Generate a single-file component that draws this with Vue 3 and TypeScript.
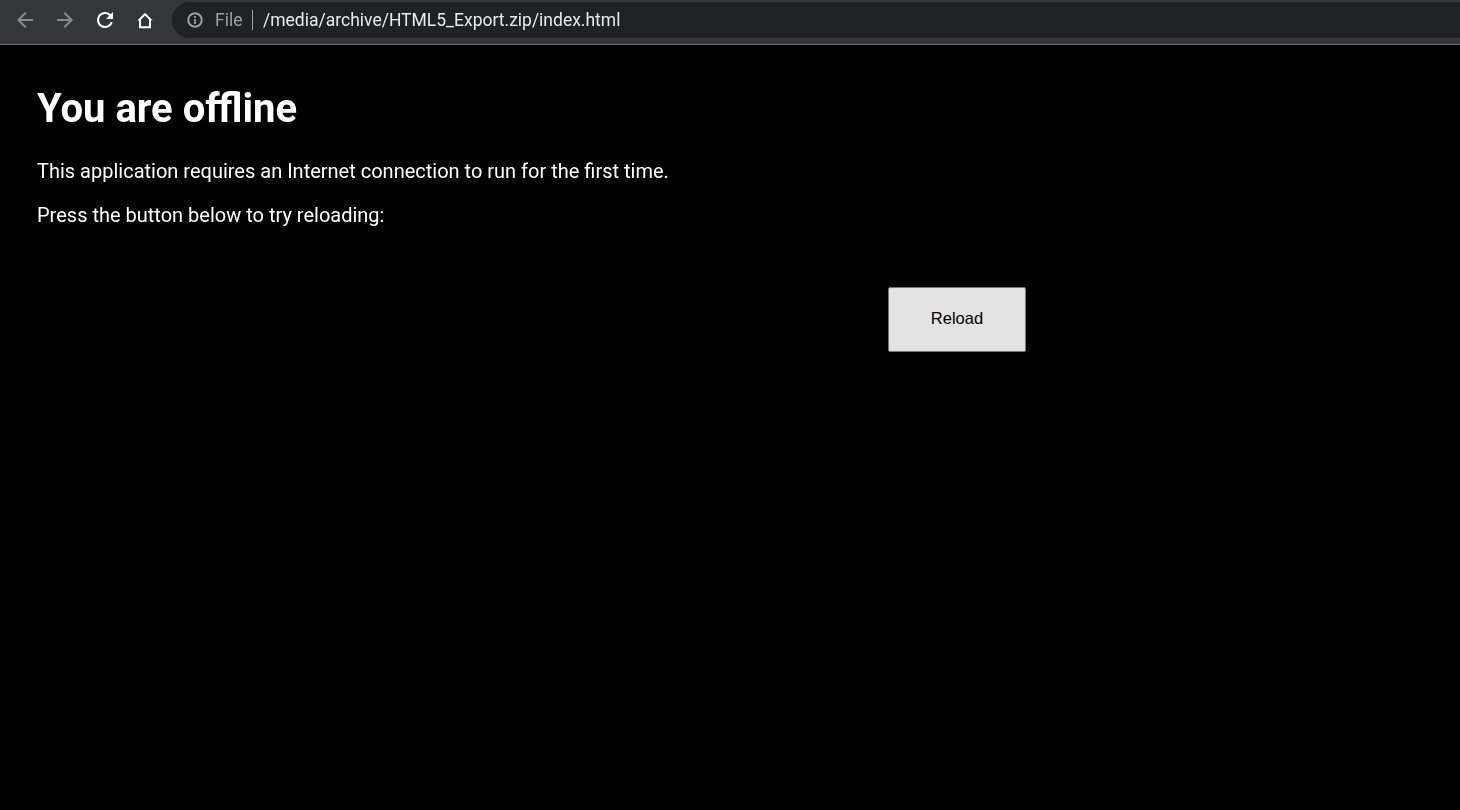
<script setup lang="ts">
const address = '/media/archive/HTML5_Export.zip/index.html'
</script>

<template>
  <div class="page">
    <header class="toolbar">
      <div class="nav">
        <svg class="icon dim" viewBox="0 0 24 24"><path d="M20 11H7.83l5.59-5.59L12 4l-8 8 8 8 1.41-1.41L7.83 13H20v-2z" /></svg>
        <svg class="icon dim" viewBox="0 0 24 24"><path d="M12 4l-1.41 1.41L16.17 11H4v2h12.17l-5.58 5.59L12 20l8-8z" /></svg>
        <svg class="icon" viewBox="0 0 24 24"><path d="M17.65 6.35A7.96 7.96 0 0 0 12 4a8 8 0 1 0 7.73 10h-2.08A6 6 0 1 1 12 6c1.66 0 3.14.69 4.22 1.78L13 11h7V4l-2.35 2.35z" /></svg>
        <svg class="icon" viewBox="0 0 24 24"><path fill-rule="evenodd" d="M12 4.7 4.3 12.4H6v7.9h12v-7.9h1.7L12 4.7zM12 7.5l4 4v6.8H8v-6.8l4-4z" /></svg>
      </div>
      <div class="omnibox">
        <svg class="info" viewBox="0 0 24 24"><path fill-rule="evenodd" d="M12 1.7a10.3 10.3 0 1 0 0 20.6 10.3 10.3 0 0 0 0-20.6zm0 2.6a7.7 7.7 0 1 1 0 15.4 7.7 7.7 0 0 1 0-15.4zM10.8 6.8h2.4v2.4h-2.4zM10.8 10.8h2.4v6.4h-2.4z" /></svg>
        <span class="scheme">File</span>
        <span class="divider"></span>
        <span class="url">{{ address }}</span>
      </div>
    </header>
    <main class="content">
      <h1>You are offline</h1>
      <p>This application requires an Internet connection to run for the first time.</p>
      <p>Press the button below to try reloading:</p>
      <button class="reload" type="button">Reload</button>
    </main>
  </div>
</template>

<style scoped>
.page {
  min-height: 810px;
  background: #000;
  color: #fff;
  font-family: Roboto, "Liberation Sans", sans-serif;
  display: flex;
  flex-direction: column;
}
.toolbar {
  height: 44px;
  box-sizing: content-box;
  background: #35363a;
  border-bottom: 1px solid #6b6c6f;
  display: flex;
  align-items: flex-start;
}
.nav {
  display: flex;
  gap: 16px;
  padding: 8px 0 0 13px;
  width: 172px;
  box-sizing: border-box;
  flex: none;
}
.icon {
  width: 24px;
  height: 24px;
  fill: #fff;
  flex: none;
}
.icon.dim {
  fill: #8a8b8d;
}
.omnibox {
  flex: 1;
  height: 36px;
  margin-top: 2px;
  background: #202124;
  border-radius: 18px 0 0 18px;
  display: flex;
  align-items: center;
  padding-left: 14px;
}
.info {
  width: 18px;
  height: 18px;
  fill: #9aa0a6;
  flex: none;
}
.scheme {
  margin-left: 11px;
  font-size: 17.5px;
  color: #9aa0a6;
  will-change: opacity;
}
.divider {
  width: 1px;
  height: 20px;
  background: #9aa0a6;
  margin-left: 10px;
}
.url {
  margin-left: 9.5px;
  font-size: 17.5px;
  color: #e8eaed;
  will-change: opacity;
}
.content {
  padding: 0 37px;
}
h1 {
  margin: 41px 0 0;
  font-size: 40px;
  line-height: 46px;
  font-weight: 700;
  will-change: opacity;
}
p {
  margin: 0;
  font-size: 20px;
  line-height: 24px;
  will-change: opacity;
}
h1 + p {
  margin-top: 27px;
}
p + p {
  margin-top: 20px;
}
.reload {
  display: block;
  margin: 60px 0 0 851px;
  width: 138px;
  height: 65px;
  background: #e3e3e3;
  border: 1px solid #767676;
  border-radius: 2px;
  color: #000;
  font-family: "Liberation Sans", Arial, sans-serif;
  font-size: 16.5px;
  padding: 0 0 3px;
}
</style>
